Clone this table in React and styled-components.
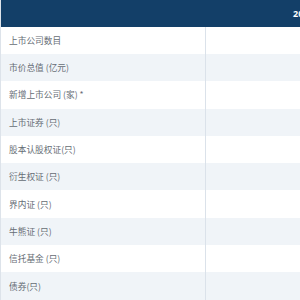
import styled, { createGlobalStyle } from "styled-components";

const GlobalStyle = createGlobalStyle`
  html, body {
    margin: 0;
    padding: 0;
    background: #ffffff;
    overflow: hidden;
  }
  body {
    font-family: "Noto Sans CJK SC", "Noto Sans", sans-serif;
  }
`;

const Table = styled.div`
  width: 400px;
  border-left: 1px solid #dde3ea;
  border-bottom: 1px solid #d8dee6;
  box-sizing: border-box;
`;

const HeaderRow = styled.div`
  display: grid;
  grid-template-columns: 205px 1fr;
  height: 26.7px;
  background: #133f68;
`;

const HeaderCell = styled.div`
  display: flex;
  align-items: center;
  padding-left: ${(p) => p.$pad || 0}px;
  color: #ffffff;
  font-family: "Open Sans", "Noto Sans", sans-serif;
  font-weight: 700;
  font-size: 9px;
`;

const Row = styled.div`
  display: grid;
  grid-template-columns: 205px 1fr;
  height: 27.3px;
  background: ${(p) => (p.$striped ? "#f0f4f8" : "#ffffff")};
`;

const LabelCell = styled.div`
  display: flex;
  align-items: center;
  padding-left: 8px;
  color: #666d75;
  font-size: 8.7px;
  white-space: nowrap;
  border-right: 1px solid #dbe2ea;
`;

const ValueCell = styled.div``;

const rows = [
  "上市公司数目",
  "市价总值 (亿元)",
  "新增上市公司 (家) *",
  "上市证券 (只)",
  "股本认股权证(只)",
  "衍生权证 (只)",
  "界内证 (只)",
  "牛熊证 (只)",
  "信托基金 (只)",
  "债券(只)",
];

export default function App() {
  return (
    <>
      <GlobalStyle />
      <Table>
        <HeaderRow>
          <HeaderCell />
          <HeaderCell $pad={87}>2023</HeaderCell>
        </HeaderRow>
        {rows.map((label, i) => (
          <Row key={label} $striped={i % 2 === 1}>
            <LabelCell>{label}</LabelCell>
            <ValueCell />
          </Row>
        ))}
      </Table>
    </>
  );
}
